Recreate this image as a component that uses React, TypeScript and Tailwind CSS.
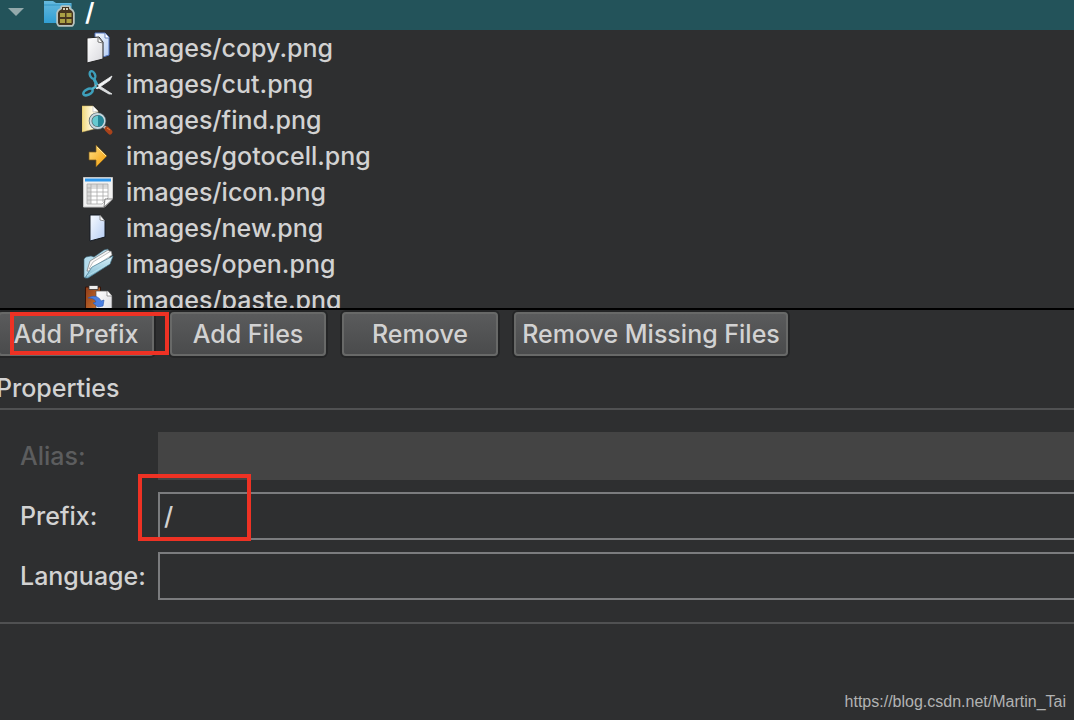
import type { ReactNode } from "react";

function ExpandIcon() {
  return (
    <svg viewBox="0 0 16 8" className="h-2 w-4" fill="#94a9ab">
      <path d="M0 0h16L8 8z" />
    </svg>
  );
}

function PrefixFolderIcon() {
  return (
    <svg viewBox="0 0 32 32" className="size-8">
      <defs>
        <linearGradient id="folder" x1="0" y1="0" x2="0" y2="1">
          <stop offset="0" stopColor="#66b9dd" />
          <stop offset="1" stopColor="#319fd3" />
        </linearGradient>
      </defs>
      <path d="M1 5h9l3 2h15.500v20H1z" fill="url(#folder)" />
      <path d="M1 9h27.500" stroke="#3296c4" />
      <path d="M16 15l3-2v-2h7v2l3 2 1 2v10l-1 2H16l-1-2V17z" fill="#46351f" stroke="#b9c4c0" strokeWidth="3.500" strokeLinejoin="round" />
      <path d="M16 15l3-2v-2h7v2l3 2 1 2v10l-1 2H16l-1-2V17z" fill="#46351f" />
      <path d="M20 12h2v2h-2zM23 12h2v2h-2z" fill="#d6d1ba" />
      <path d="M17 17h5v4h-5zM23.500 17h5v4h-5zM17 23h5v4h-5zM23.500 23h5v4h-5z" fill="#aaa044" />
    </svg>
  );
}

function FileIcon({ children }: { children: ReactNode }) {
  return (
    <svg viewBox="0 0 32 32" className="size-8 shrink-0" strokeLinejoin="round">
      <defs>
        <linearGradient id="paper" x1="0" y1="0" x2="1" y2="1">
          <stop offset="0" stopColor="#ffffff" />
          <stop offset="1" stopColor="#d9d9de" />
        </linearGradient>
        <linearGradient id="bluePaper" x1="0" y1="0" x2="1" y2="1">
          <stop offset="0" stopColor="#f8fbff" />
          <stop offset="1" stopColor="#b5cdf4" />
        </linearGradient>
        <linearGradient id="gold" x1="0" y1="0" x2="1" y2="1">
          <stop offset="0" stopColor="#ffe28a" />
          <stop offset="1" stopColor="#f39a00" />
        </linearGradient>
        <linearGradient id="manila" x1="0" y1="0" x2="1" y2="0">
          <stop offset="0" stopColor="#f1d878" />
          <stop offset=".6" stopColor="#fff8df" />
        </linearGradient>
        <linearGradient id="clip" x1="0" y1="0" x2="1" y2="1">
          <stop offset="0" stopColor="#8e3b18" />
          <stop offset="1" stopColor="#d98136" />
        </linearGradient>
        <linearGradient id="lightFolder" x1="0" y1="0" x2="0" y2="1">
          <stop offset="0" stopColor="#d8f1fa" />
          <stop offset="1" stopColor="#7fb9d0" />
        </linearGradient>
      </defs>
      {children}
    </svg>
  );
}

const files = [
  {
    name: "images/copy.png",
    icon: (
      <FileIcon>
        <path d="M13 1h10l4 4v18l-6 2-8-2z" fill="url(#bluePaper)" stroke="#5579c5" />
        <path d="M23 1v5h4" fill="#fff" stroke="#6e87bd" />
        <path d="M5 6l12-1 4 5v17L5 31z" fill="url(#paper)" stroke="#222" />
        <path d="M16 5v5l5 1z" fill="#fff" stroke="#777" />
      </FileIcon>
    ),
  },
  {
    name: "images/cut.png",
    icon: (
      <FileIcon>
        <path d="M13 15l17 11-3 0-14-8z" fill="#d9dcde" stroke="#e4e7e8" strokeWidth=".8" />
        <path d="M13 19l17-11-2 4-13 9z" fill="#f2f4f5" stroke="#eceeef" strokeWidth=".8" />
        <path d="M15 17l-3-6" stroke="#3fa5bf" strokeWidth="3" />
        <ellipse cx="10.500" cy="7" rx="2.500" ry="4" transform="rotate(-25 10.500 7)" fill="none" stroke="#3d9fbb" strokeWidth="2.400" />
        <ellipse cx="6" cy="24" rx="5" ry="2.800" transform="rotate(-28 6 24)" fill="none" stroke="#3d9fbb" strokeWidth="2.600" />
        <path d="M10 21l5-3" stroke="#55b7cc" strokeWidth="2.500" />
        <circle cx="15.500" cy="18" r="1" fill="#333" />
      </FileIcon>
    ),
  },
  {
    name: "images/find.png",
    icon: (
      <FileIcon>
        <path d="M0 2h11l5 5v17L0 28z" fill="url(#manila)" stroke="#d2b65d" strokeWidth=".5" />
        <path d="M11 2v6l5-1z" fill="#fff" stroke="#aaa" strokeWidth=".5" />
        <path d="M21 22l3 2" stroke="#bbb" strokeWidth="3" />
        <path d="M25 25l3 3" stroke="#a9431b" strokeWidth="5" strokeLinecap="round" />
        <path d="M25 24l3 2" stroke="#e98643" strokeWidth="1" />
        <circle cx="15.500" cy="17" r="7" fill="#65c9d0" stroke="#54646a" strokeWidth="3.500" />
        <circle cx="15.500" cy="17" r="7" fill="none" stroke="#c8d8df" strokeWidth="2" />
        <path d="M16 11a6 6 0 0 1 0 12z" fill="#258798" />
      </FileIcon>
    ),
  },
  {
    name: "images/gotocell.png",
    icon: (
      <FileIcon>
        <path d="M7 12h7V5l11 11-11 11v-7H7z" fill="url(#gold)" stroke="#79591b" strokeWidth=".7" />
        <path d="M15 7l9 9" stroke="#ffe89a" />
      </FileIcon>
    ),
  },
  {
    name: "images/icon.png",
    icon: (
      <FileIcon>
        <path d="M1.500 1.500h29V23l-8 8h-21z" fill="#f2f2f2" stroke="#c6c6c6" />
        <path d="M3 2.500h26v3H3z" fill="#3199ec" />
        <path d="M5 8h21v14l-6 6H5z" fill="#fff" />
        <path d="M5 8h21v3H5zM5 11h4v17H5z" fill="#d8d8d8" />
        <path d="M5 8h21v14l-6 6H5zM9 8v20M15 8v20M21 8v18M5 12h21M5 16h21M5 20h21M5 24h18" fill="none" stroke="#aaa" strokeWidth=".8" />
        <path d="M22 31l1-8h8z" fill="#fafafa" stroke="#555" strokeWidth=".7" />
      </FileIcon>
    ),
  },
  {
    name: "images/new.png",
    icon: (
      <FileIcon>
        <path d="M8 3h10l5 5v17L8 29z" fill="url(#bluePaper)" stroke="#151a22" />
        <path d="M18 3v5l5 1z" fill="#fff" stroke="#777" strokeWidth=".8" />
      </FileIcon>
    ),
  },
  {
    name: "images/open.png",
    icon: (
      <FileIcon>
        <path d="M2 11l2-2 5-1 3 1L22 2l4-1 1 5L8 24l-5 6-1-1z" fill="#b4dcec" stroke="#3d6577" strokeWidth=".6" />
        <path d="M5 23l3-10L26 2l3 2-2 8-18 11z" fill="#f7f7f7" stroke="#777" strokeWidth=".7" />
        <path d="M7 21l4-7L29 3l1 4-20 13z" fill="#fff" stroke="#999" strokeWidth=".6" />
        <path d="M3 30l7-11L31 8l-3 8L6 30z" fill="url(#lightFolder)" stroke="#4a7c92" strokeWidth=".7" />
        <path d="M5 28l23-13" stroke="#b8e2ef" strokeWidth=".8" />
      </FileIcon>
    ),
  },
  {
    name: "images/paste.png",
    icon: (
      <FileIcon>
        <path d="M3.500 3h15v28h-15z" fill="url(#clip)" stroke="#351307" />
        <path d="M7 1.500h9v4H7z" fill="#ededed" stroke="#333" strokeWidth=".8" />
        <path d="M14 7h12l4 5v18H14z" fill="url(#paper)" stroke="#555" strokeWidth=".7" />
        <path d="M25 7v5h5" fill="#fff" stroke="#777" strokeWidth=".7" />
        <path d="M6 14c5-3 11-2 13 3l3-1-1 6-5 1-5-4 3-1c-1-3-4-4-8-4z" fill="#4b7fe0" stroke="#2857ae" strokeWidth=".6" />
      </FileIcon>
    ),
  },
];

const buttonClass =
  "h-11 rounded-sm border-2 border-[#686968] bg-linear-to-b from-[#5a5b5c] to-[#4a4b4c] text-center font-medium whitespace-nowrap shadow-[0_0_0_2px_#242526]";

const inputClass = "h-12 min-w-0 flex-1 border-y-2 border-l-2 border-[#7b7c7e] bg-transparent px-1 outline-none";

export default function App() {
  return (
    <main className="flex min-h-screen flex-col overflow-hidden bg-[#2e2f30] font-['Inter','Liberation_Sans',sans-serif] text-[25px]/9 font-medium text-[#d2d2d2]">
      <section className="border-b-2 border-black">
        <div className="flex h-[30px] items-end overflow-hidden bg-[#23535a]">
          <div className="flex h-9 items-center pl-2 text-white">
            <ExpandIcon />
            <div className="ml-[19px]">
              <PrefixFolderIcon />
            </div>
            <span className="ml-2.5 font-semibold">/</span>
          </div>
        </div>
        <ul className="h-[278px] overflow-hidden">
          {files.map((file) => (
            <li key={file.name} className="flex h-9 items-center gap-3 pl-[82px]">
              {file.icon}
              <span>{file.name}</span>
            </li>
          ))}
        </ul>
      </section>

      <section className="-ml-0.5 flex gap-4 pt-0.5">
        <div className="relative flex">
          <button className={`${buttonClass} w-[156px]`}>Add Prefix</button>
          <div className="pointer-events-none absolute top-0 left-3 h-[43px] w-[159px] border-4 border-[#ee3224]" />
        </div>
        <button className={`${buttonClass} w-[156px]`}>Add Files</button>
        <button className={`${buttonClass} w-[156px]`}>Remove</button>
        <button className={`${buttonClass} w-[274px]`}>Remove Missing Files</button>
      </section>

      <section>
        <h2 className="-ml-1 border-b-2 border-[#505152] pt-3.5 pb-0.5 font-medium">Properties</h2>
        <form className="flex flex-col gap-3 border-b-2 border-[#505152] pt-[22px] pb-[22px] pl-5">
          <div className="flex items-center">
            <label htmlFor="alias" className="w-[138px] text-[#5c5d5e]">Alias:</label>
            <input id="alias" disabled className="h-12 min-w-0 flex-1 bg-[#444444]" />
          </div>
          <div className="relative flex items-center">
            <label htmlFor="prefix" className="w-[138px]">Prefix:</label>
            <input id="prefix" defaultValue="/" className={inputClass} />
            <div className="pointer-events-none absolute -top-[18px] left-[118px] h-[67px] w-[113px] border-4 border-[#ee3224]" />
          </div>
          <div className="flex items-center">
            <label htmlFor="language" className="w-[138px]">Language:</label>
            <input id="language" className={inputClass} />
          </div>
        </form>
      </section>

      <footer className="mt-auto pr-2 pb-1.5 text-right font-['Liberation_Sans',Arial,sans-serif] text-base/6 font-normal text-[#b2b3b3]">
        https://blog.csdn.net/Martin_Tai
      </footer>
    </main>
  );
}
